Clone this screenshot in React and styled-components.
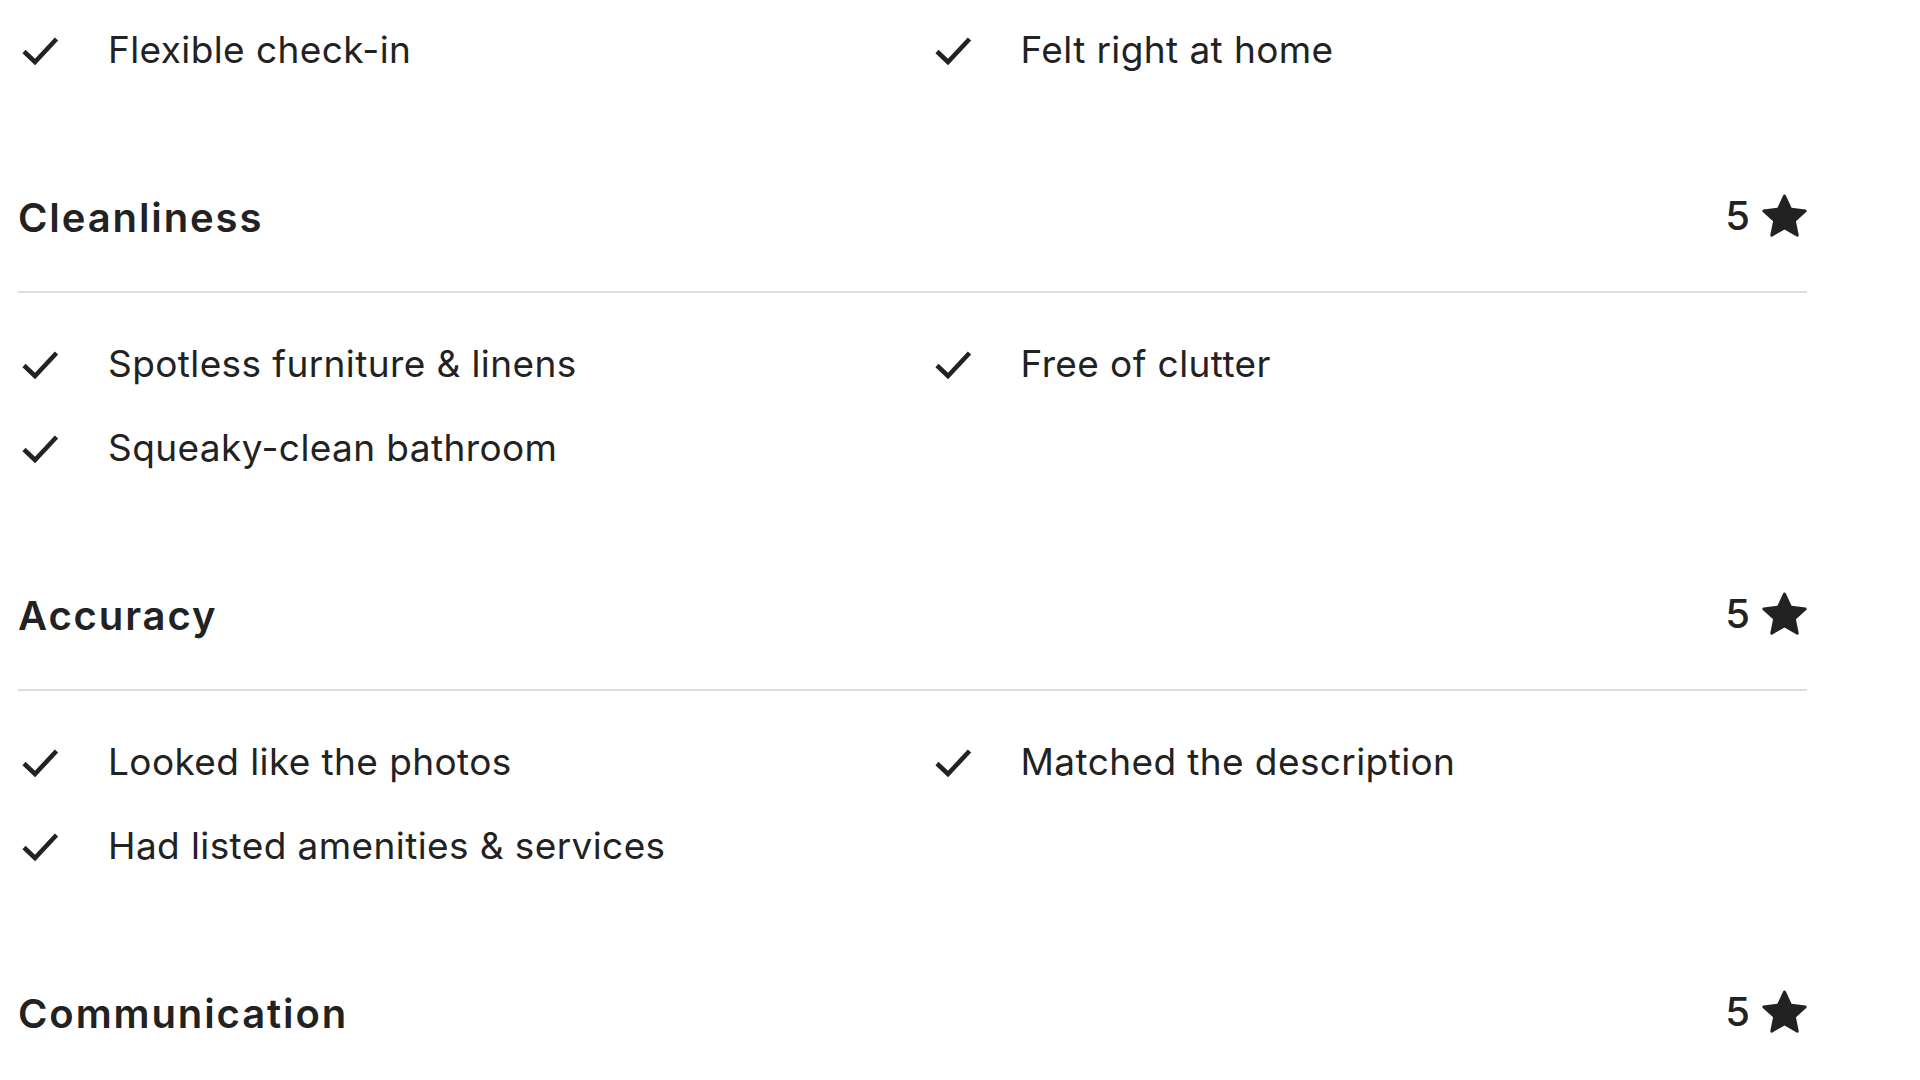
import React from "react";
import styled, { createGlobalStyle } from "styled-components";

const Global = createGlobalStyle`
  html, body { margin: 0; padding: 0; background: #ffffff; }
  body { font-family: "Inter", "Liberation Sans", sans-serif; color: #222222; overflow: hidden; }
`;

const Page = styled.div`
  width: 1789px;
  padding: 8px 0 0 18px;
`;

const Section = styled.section`
  margin-top: ${(p) => (p.$first ? "0" : "96px")};
`;

const Header = styled.div`
  height: 60px;
  display: flex;
  align-items: center;
  justify-content: space-between;
  margin-bottom: 43px;
`;

const Title = styled.h2`
  margin: 0;
  font-size: 40px;
  line-height: 60px;
  font-weight: 600;
  letter-spacing: 1.9px;
  color: #222222;
`;

const Rating = styled.div`
  display: flex;
  align-items: center;
  gap: 12px;
  font-size: 40px;
  font-weight: 500;
  color: #222222;
  margin-top: -6px;
`;

const Divider = styled.hr`
  margin: 0;
  border: 0;
  height: 2px;
  background: #dddddd;
`;

const List = styled.ul`
  list-style: none;
  margin: 0;
  padding: ${(p) => (p.$first ? "0" : "29px")} 0 0 0;
  display: grid;
  grid-template-columns: 1fr 1fr;
  column-gap: 36px;
`;

const Item = styled.li`
  height: 84px;
  display: flex;
  align-items: center;
  gap: 48px;
`;

const Label = styled.span`
  font-size: 37px;
  font-weight: 400;
  letter-spacing: 0.4px;
  line-height: 84px;
  color: #222222;
  white-space: nowrap;
`;

const CheckSvg = styled.svg`
  width: 42px;
  height: 32px;
  flex: none;
  overflow: visible;
`;

const Check = () => (
  <CheckSvg viewBox="0 0 42 32" aria-hidden="true">
    <path
      d="M6 17.5 L17 28 L38.5 5"
      fill="none"
      stroke="#222222"
      strokeWidth="4.6"
      strokeLinejoin="miter"
    />
  </CheckSvg>
);

const StarSvg = styled.svg`
  width: 45px;
  height: 45px;
  display: block;
`;

const Star = () => (
  <StarSvg viewBox="0 0 32 32" aria-hidden="true">
    <path
      fill="#222222"
      d="M15.1 1.58l-4.13 8.88-9.86 1.27a1 1 0 0 0-.54 1.74l7.3 6.57-1.97 9.85a1 1 0 0 0 1.48 1.06l8.62-5 8.63 5a1 1 0 0 0 1.48-1.06l-1.97-9.85 7.3-6.57a1 1 0 0 0-.55-1.73l-9.86-1.28-4.12-8.88a1 1 0 0 0-1.82 0z"
    />
  </StarSvg>
);

const sections = [
  {
    title: "Cleanliness",
    rating: 5,
    items: ["Spotless furniture & linens", "Free of clutter", "Squeaky-clean bathroom"],
  },
  {
    title: "Accuracy",
    rating: 5,
    items: ["Looked like the photos", "Matched the description", "Had listed amenities & services"],
  },
  {
    title: "Communication",
    rating: 5,
    items: [],
  },
];

const Items = ({ items, first }) => (
  <List $first={first}>
    {items.map((t) => (
      <Item key={t}>
        <Check />
        <Label>{t}</Label>
      </Item>
    ))}
  </List>
);

export default function App() {
  return (
    <>
      <Global />
      <Page>
        <Section $first>
          <Items first items={["Flexible check-in", "Felt right at home"]} />
        </Section>
        {sections.map((s) => (
          <Section key={s.title}>
            <Header>
              <Title>{s.title}</Title>
              <Rating>
                <span>{s.rating}</span>
                <Star />
              </Rating>
            </Header>
            <Divider />
            {s.items.length > 0 && <Items items={s.items} />}
          </Section>
        ))}
      </Page>
    </>
  );
}
